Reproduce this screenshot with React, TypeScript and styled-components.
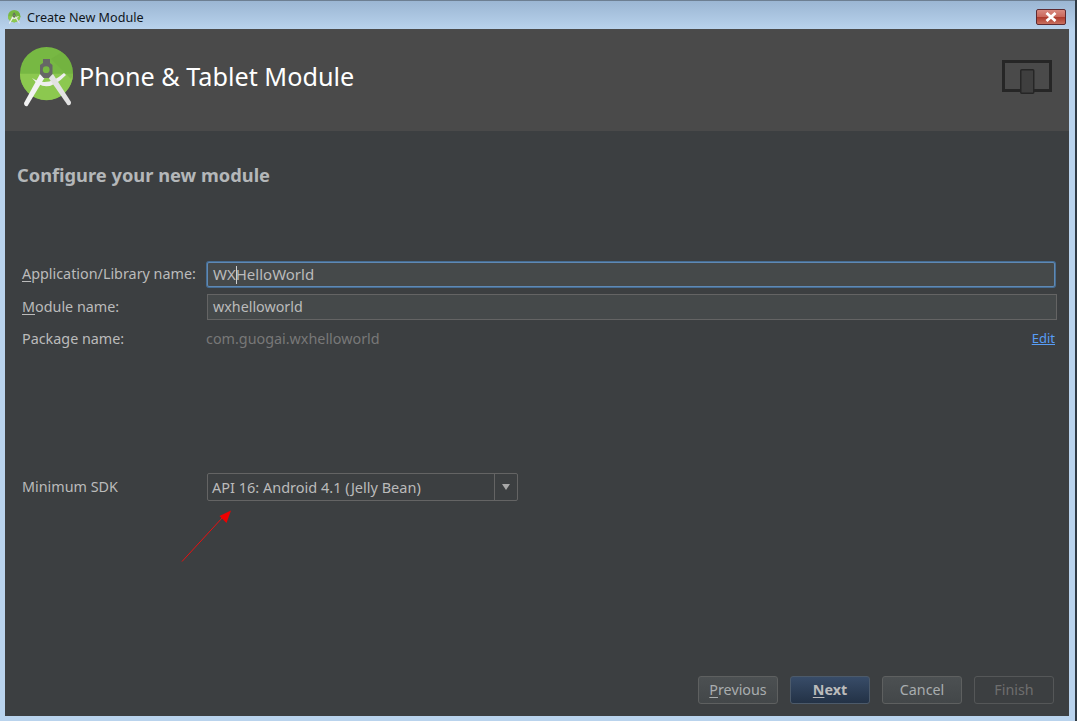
import React from 'react';
import styled, { createGlobalStyle } from 'styled-components';

const GlobalStyle = createGlobalStyle`
  html, body {
    margin: 0;
    padding: 0;
    background: #b9d3ec;
  }
  body {
    font-family: "Noto Sans", "Open Sans", sans-serif;
  }
`;

const Window = styled.div`
  position: relative;
  box-sizing: border-box;
  width: 1077px;
  height: 721px;
  display: flex;
  flex-direction: column;
  padding: 1px 2px 0 0;
  overflow: hidden;
  background: linear-gradient(#9ab5d2 0, #b9d3ed 30px, #b9d3ed 100%);
  box-shadow: inset -2px 0 0 #2f3a44, inset 0 1px 0 #6d7f92;
`;

const TitleBar = styled.div`
  box-sizing: border-box;
  height: 28px;
  flex: none;
  display: flex;
  align-items: center;
  padding: 4px 5px 0 8px;
  gap: 5px;
`;

const TitleText = styled.span`
  flex: 1;
  font-size: 12.6px;
  color: #10161c;
`;

const CloseButton = styled.div`
  box-sizing: border-box;
  width: 30px;
  height: 16px;
  margin: 0 4px 0 0;
  display: flex;
  align-items: center;
  justify-content: center;
  border: 1px solid #5e2a30;
  border-radius: 2px;
  background: linear-gradient(#d98a80 0, #c9695d 48%, #ad3a2c 52%, #c8705f 100%);
`;

const Content = styled.div`
  flex: 1;
  display: flex;
  flex-direction: column;
  margin: 0 6px 5px 5px;
  background: #3c3f41;
`;

const Banner = styled.div`
  height: 102px;
  flex: none;
  display: flex;
  align-items: center;
  padding: 0 17px 0 15px;
  background: #4a4a4a;
`;

const LogoSlot = styled.div`
  display: flex;
  margin-bottom: 6px;
`;

const BannerTitle = styled.h1`
  flex: 1;
  margin: 0 0 8px -1px;
  font-size: 25.2px;
  font-weight: 400;
  color: #ffffff;
`;

const BannerIcon = styled.svg`
  margin-bottom: 6px;
`;

const Body = styled.div`
  flex: 1;
  display: flex;
  flex-direction: column;
  padding: 0 15px 12px 12px;
`;

const Heading = styled.h2`
  margin: 32px 0 0;
  height: 24px;
  line-height: 24px;
  font-size: 18.3px;
  font-weight: 700;
  color: #b4b7b9;
`;

const Form = styled.div`
  margin: 75px 0 0 5px;
  display: flex;
  flex-direction: column;
`;

const Row = styled.div<{ $top?: number; $height: number }>`
  display: flex;
  align-items: center;
  height: ${p => p.$height}px;
  margin-top: ${p => p.$top ?? 0}px;
`;

const Label = styled.label`
  flex: none;
  width: 185px;
  margin-bottom: 2px;
  font-size: 14.35px;
  color: #bbbbbb;
`;

const Mnemonic = styled.span`
  text-decoration: underline;
  text-underline-offset: 2px;
`;

const Field = styled.div<{ $focused?: boolean }>`
  box-sizing: border-box;
  flex: 1;
  height: ${p => (p.$focused ? 25 : 26)}px;
  margin-right: ${p => (p.$focused ? -1 : -3)}px;
  display: flex;
  align-items: center;
  padding: 0 0 2px 5px;
  font-size: ${p => (p.$focused ? 15 : 14.3)}px;
  color: #bbbbbb;
  background: #45494a;
  border: 1px solid ${p => (p.$focused ? '#5f89b4' : '#646464')};
  border-radius: ${p => (p.$focused ? 2 : 0)}px;
  box-shadow: ${p => (p.$focused ? '0 0 0 1px #466d94' : 'none')};
`;

const Caret = styled.span`
  width: 1px;
  height: 18px;
  margin: 2px -1px 0 0;
  background: #d0d0d0;
`;

const StaticValue = styled.span`
  flex: 1;
  margin: 0 0 2px -1px;
  font-size: 14.35px;
  color: #787878;
`;

const EditLink = styled.a`
  font-size: 13px;
  color: #589df6;
  text-decoration: underline;
  margin: 0 -1px 2px 0;
`;

const Combo = styled.div`
  box-sizing: border-box;
  width: 311px;
  height: 28px;
  display: flex;
  align-items: center;
  border: 1px solid #646464;
  border-radius: 2px;
  font-size: 14.5px;
  color: #bbbbbb;
`;

const ComboValue = styled.span`
  flex: 1;
  padding-left: 4px;
`;

const ComboArrow = styled.div`
  width: 22px;
  height: 100%;
  display: flex;
  align-items: center;
  justify-content: center;
  border-left: 1px solid #646464;
  &::after {
    content: '';
    border-left: 4px solid transparent;
    border-right: 4px solid transparent;
    border-top: 6px solid #a8a8a8;
  }
`;

const Footer = styled.div`
  margin-top: auto;
  display: flex;
  justify-content: flex-end;
  gap: 12px;
`;

const Button = styled.button<{ $primary?: boolean }>`
  box-sizing: border-box;
  width: 80px;
  height: 28px;
  padding: 0 0 2px;
  font-family: inherit;
  font-size: 14.3px;
  font-weight: ${p => (p.$primary ? 700 : 400)};
  color: ${p => (p.$primary ? '#bbbbbb' : '#a9adaf')};
  border: 1px solid ${p => (p.$primary ? '#4c5a6a' : '#5e6060')};
  border-radius: 3px;
  background: ${p => (p.$primary ? 'linear-gradient(#384c68, #233246)' : 'linear-gradient(#4c5052, #434749)')};
  &:disabled {
    color: #6e6e6e;
    background: transparent;
    border-color: #555758;
  }
`;

const Annotation = styled.svg`
  position: absolute;
  left: 178px;
  top: 505px;
`;

const AndroidStudioLogo = ({ size }: { size: number }) => (
  <svg width={size} height={size} viewBox="0 0 60 60">
    <circle cx="26.5" cy="26.5" r="26.5" fill="#77b843" />
    <path d="M0 26.7 H53 A26.5 26.5 0 0 1 0 26.7 Z" fill="#8cc84f" />
    <path d="M31 12 L51 32 A26.5 26.5 0 0 0 53 26.5 A26.5 26.5 0 0 0 42 5 Z" fill="#6fad3e" opacity="0.5" />
    <path d="M12 31 Q26 49 46 28 L44 26 Q27 41 12 31 Z" fill="#eeeeee" />
    <path d="M20 27 L25 30 L7.5 59 Q4.5 60 4 56 Z" fill="#f2f2f2" />
    <path d="M33 27 L28 30 L47.5 58 Q51 59 51 55 Z" fill="#e2e2e2" />
    <path d="M23 12 H30 V16 L32.5 18 V27 L29 31 H23.5 L20 27 V18 L23 16 Z" fill="#666666" />
    <circle cx="26.2" cy="22.7" r="3.4" fill="#77b843" />
  </svg>
);

const App = () => (
  <>
    <GlobalStyle />
    <Window>
      <TitleBar>
        <AndroidStudioLogo size={14} />
        <TitleText>Create New Module</TitleText>
        <CloseButton>
          <svg width="14" height="10" viewBox="0 0 14 10">
            <path d="M2.5 1 L11.5 9 M11.5 1 L2.5 9" stroke="#ffffff" strokeWidth="2.8" />
          </svg>
        </CloseButton>
      </TitleBar>
      <Content>
        <Banner>
          <LogoSlot>
            <AndroidStudioLogo size={60} />
          </LogoSlot>
          <BannerTitle>Phone &amp; Tablet Module</BannerTitle>
          <BannerIcon width="50" height="34" viewBox="0 0 50 34">
            <path d="M1.5 1.5 H48.5 V30.5 H1.5 Z" fill="none" stroke="#262626" strokeWidth="3" />
            <rect x="18.75" y="9.75" width="13" height="23.5" rx="1" fill="#3f3f3f" stroke="#262626" strokeWidth="1.5" />
          </BannerIcon>
        </Banner>
        <Body>
          <Heading>Configure your new module</Heading>
          <Form>
            <Row $height={25}>
              <Label>
                <Mnemonic>A</Mnemonic>pplication/Library name:
              </Label>
              <Field $focused>
                WX
                <Caret />
                HelloWorld
              </Field>
            </Row>
            <Row $top={7} $height={26}>
              <Label>
                <Mnemonic>M</Mnemonic>odule name:
              </Label>
              <Field>wxhelloworld</Field>
            </Row>
            <Row $top={6} $height={26}>
              <Label>Package name:</Label>
              <StaticValue>com.guogai.wxhelloworld</StaticValue>
              <EditLink>Edit</EditLink>
            </Row>
            <Row $top={121} $height={28}>
              <Label>Minimum SDK</Label>
              <Combo>
                <ComboValue>API 16: Android 4.1 (Jelly Bean)</ComboValue>
                <ComboArrow />
              </Combo>
            </Row>
          </Form>
          <Footer>
            <Button>
              <Mnemonic>P</Mnemonic>revious
            </Button>
            <Button $primary>
              <Mnemonic>N</Mnemonic>ext
            </Button>
            <Button>Cancel</Button>
            <Button disabled>Finish</Button>
          </Footer>
        </Body>
      </Content>
      <Annotation width="60" height="60" viewBox="0 0 60 60">
        <path d="M4 56.5 L45 12" stroke="#e81010" strokeWidth="1" fill="none" />
        <path d="M53 5.5 L41.5 11 L48.5 18 Z" fill="#f00000" />
      </Annotation>
    </Window>
  </>
);

export default App;
